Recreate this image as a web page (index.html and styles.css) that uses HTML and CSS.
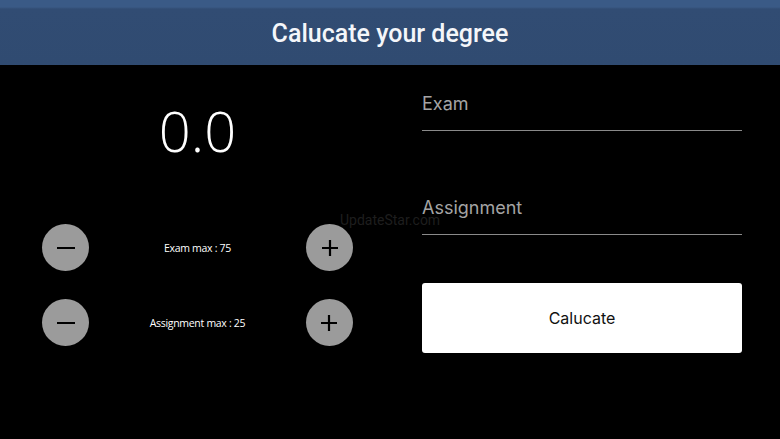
FILE: index.html
```html
<!DOCTYPE html>
<html lang="en">
  <head>
    <meta charset="UTF-8" />
    <meta name="viewport" content="width=device-width, initial-scale=1.0" />
    <title>Calucate your degree</title>
    <link rel="stylesheet" href="styles.css">
  </head>
  <body>
    <header>
      <h1>Calucate your degree</h1>
    </header>
    <div class="container">
      <div class="score-panel">
        <p class="score">0.0</p>
        <div class="stepper">
          <button class="round-btn" aria-label="minus">
            <svg width="18" height="18" viewBox="0 0 18 18"><path d="M0 9h18" stroke="#000" stroke-width="2"/></svg>
          </button>
          <span class="stepper-label">Exam max : 75</span>
          <button class="round-btn" aria-label="plus">
            <svg width="18" height="18" viewBox="0 0 18 18"><path d="M1 9h16M9 1v16" stroke="#000" stroke-width="2.2"/></svg>
          </button>
        </div>
        <div class="stepper">
          <button class="round-btn" aria-label="minus">
            <svg width="18" height="18" viewBox="0 0 18 18"><path d="M0 9h18" stroke="#000" stroke-width="2"/></svg>
          </button>
          <span class="stepper-label">Assignment max : 25</span>
          <button class="round-btn" aria-label="plus">
            <svg width="18" height="18" viewBox="0 0 18 18"><path d="M1 9h16M9 1v16" stroke="#000" stroke-width="2.2"/></svg>
          </button>
        </div>
      </div>
      <form class="grade-form">
        <input type="text" placeholder="Exam" />
        <input type="text" placeholder="Assignment" />
        <button type="submit" class="calc-btn">Calucate</button>
      </form>
      <span class="watermark">UpdateStar.com</span>
    </div>
  </body>
</html>
```

FILE: styles.css
```css
* {
  box-sizing: border-box;
  margin: 0;
  padding: 0;
}

body {
  font-family: "Roboto", "Liberation Sans", sans-serif;
  background-color: #000;
  color: #fff;
  height: 439px;
  overflow: hidden;
}

header {
  height: 65px;
  background: linear-gradient(#3a5a86 0, #3a5a86 7px, #314c73 9px, #304b71 100%);
  display: flex;
  align-items: center;
  justify-content: center;
  padding-top: 2px;
}

header h1 {
  font-size: 25px;
  font-weight: 500;
  color: #f4f6fa;
}

.container {
  position: relative;
  display: flex;
  padding: 0 38px 0 42px;
}

.score-panel {
  width: 311px;
  display: flex;
  flex-direction: column;
}

.score {
  font-family: "Open Sans", sans-serif;
  font-weight: 300;
  font-size: 56px;
  line-height: 1;
  text-align: center;
  margin-top: 37px;
  margin-bottom: 66px;
}

.stepper {
  display: flex;
  align-items: center;
  justify-content: space-between;
  height: 47px;
  margin-bottom: 28px;
}

.round-btn {
  width: 47px;
  height: 47px;
  border-radius: 50%;
  border: none;
  background-color: #9b9b9b;
  display: flex;
  align-items: center;
  justify-content: center;
}

.stepper-label {
  font-family: "Open Sans", sans-serif;
  font-size: 10.5px;
  letter-spacing: -0.3px;
  color: #fff;
}

.grade-form {
  margin-left: 69px;
  width: 320px;
  display: flex;
  flex-direction: column;
}

.grade-form input {
  background: transparent;
  border: none;
  border-bottom: 1px solid #8a8a8a;
  color: #fff;
  font-family: "Inter", "Roboto", sans-serif;
  font-size: 18px;
  height: 48px;
  padding: 0 0 6px;
  margin-top: 18px;
}

.grade-form input + input {
  margin-top: 56px;
}

.grade-form input::placeholder {
  color: #a4a4a4;
}

.calc-btn {
  margin-top: 48px;
  height: 70px;
  background-color: #fff;
  border: none;
  border-radius: 3px;
  font-family: "Inter", "Roboto", sans-serif;
  font-size: 16px;
  color: #111;
}

.watermark {
  position: absolute;
  left: 340px;
  top: 147px;
  font-size: 14px;
  color: #1e1e1e;
}
```
